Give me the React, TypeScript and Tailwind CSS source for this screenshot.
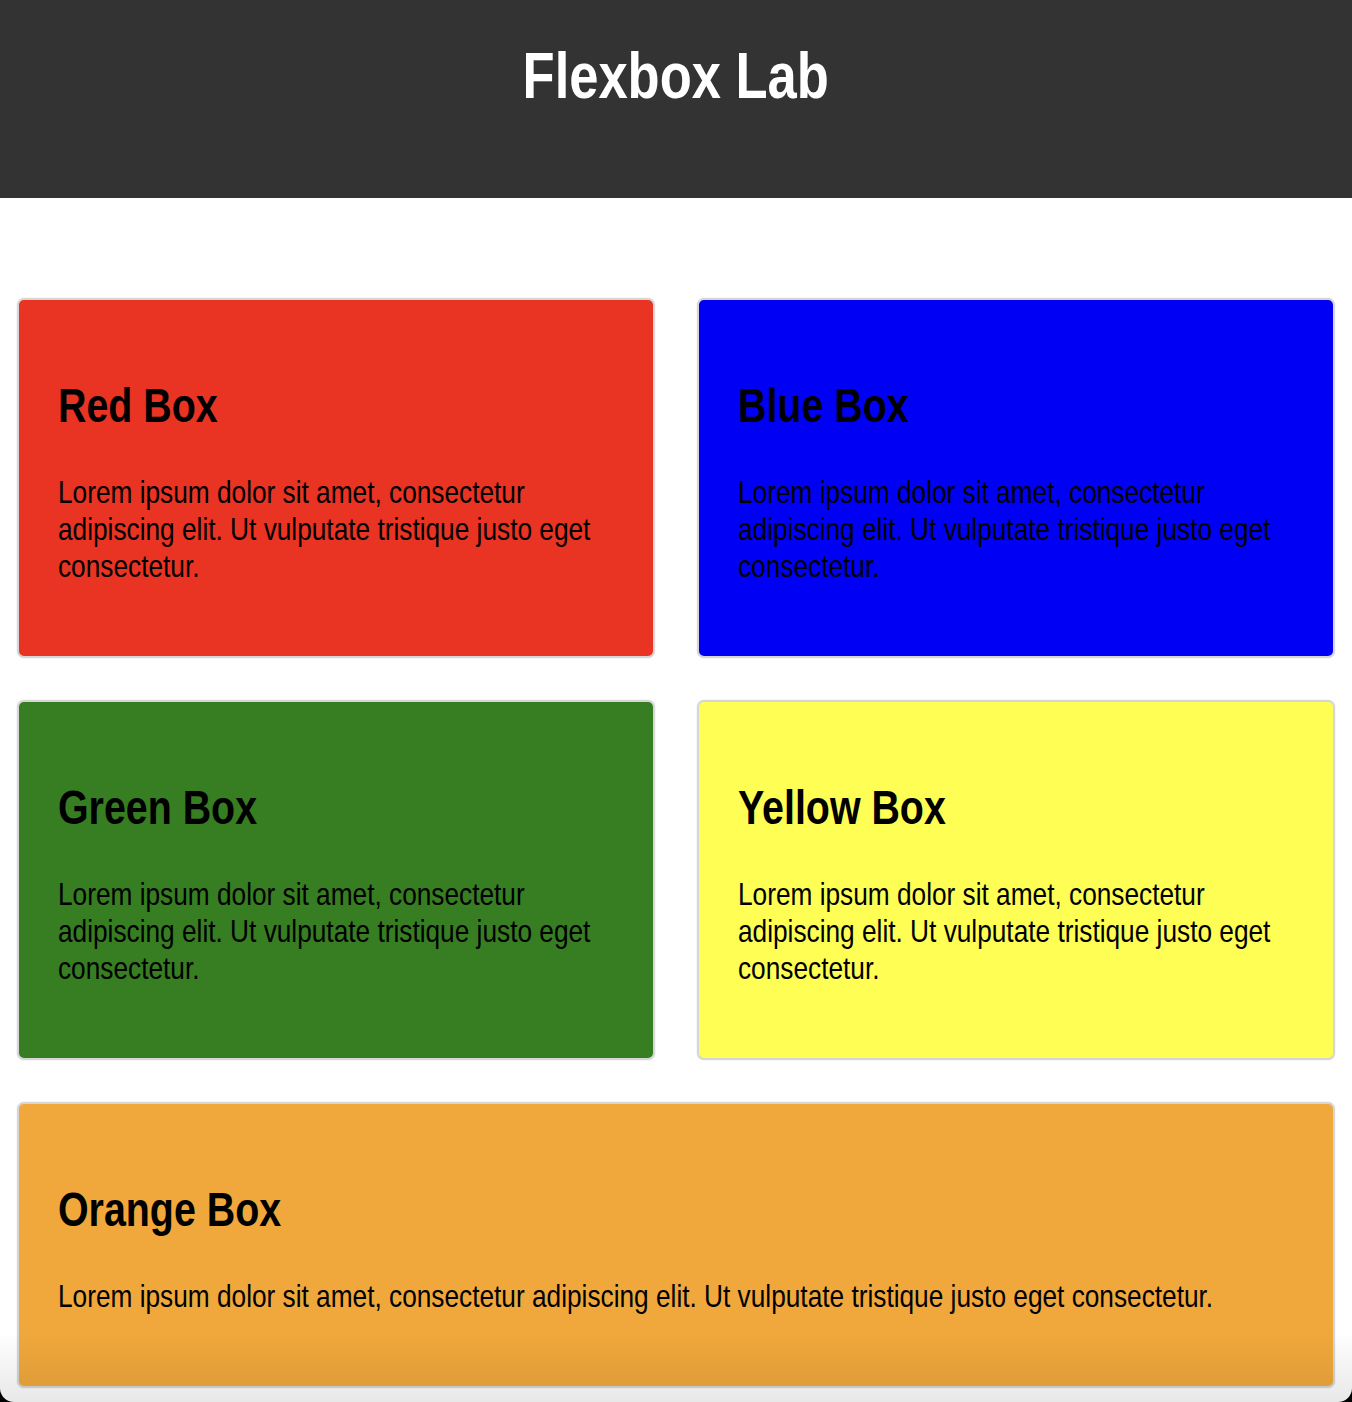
import React from "react";

const lorem =
  "Lorem ipsum dolor sit amet, consectetur adipiscing elit. Ut vulputate tristique justo eget consectetur.";

// the page text is a narrow Arial; Liberation Sans squeezed to 82% width
function Box({ title, color, wide }: { title: string; color: string; wide?: boolean }) {
  return (
    <div
      className={`${color} ${wide ? "col-span-2" : ""} rounded-[7px] border-2 border-[#d6d6d6] px-[39px] pt-[40px] pb-[41px] text-black shadow-[0_0_2px_rgba(0,0,0,0.12)]`}
    >
      <div className="w-[121.95%] origin-left scale-x-[0.82]">
        <h2 className="mt-[38px] mb-[41px] text-[48px] font-bold leading-[55px]">{title}</h2>
        <p className="mb-[30px] text-[32px] leading-[37px]">{lorem}</p>
      </div>
    </div>
  );
}

export default function App() {
  return (
    <div className="bg-black" style={{ fontFamily: '"Liberation Sans", Arial, sans-serif' }}>
      <div className="relative h-[1402px] overflow-hidden rounded-b-[14px] bg-white">
        <header className="h-[198px] bg-[#333333] pt-[39px] text-center">
          <h1 className="text-[64px] font-bold leading-[74px] text-white">
            <span className="inline-block scale-x-[0.82]">Flexbox Lab</span>
          </h1>
        </header>

        <main className="grid grid-cols-2 gap-[42px] px-[17px] pt-[100px]">
          <Box title="Red Box" color="bg-[#e93323]" />
          <Box title="Blue Box" color="bg-[#0000f5]" />
          <Box title="Green Box" color="bg-[#377d22]" />
          <Box title="Yellow Box" color="bg-[#fefe54]" />
          <Box title="Orange Box" color="bg-[#f0a83c]" wide />
        </main>

        <div className="pointer-events-none absolute inset-x-0 bottom-0 h-[70px] bg-[linear-gradient(to_bottom,rgba(0,0,0,0),rgba(0,0,0,0.09))]" />
      </div>
    </div>
  );
}
